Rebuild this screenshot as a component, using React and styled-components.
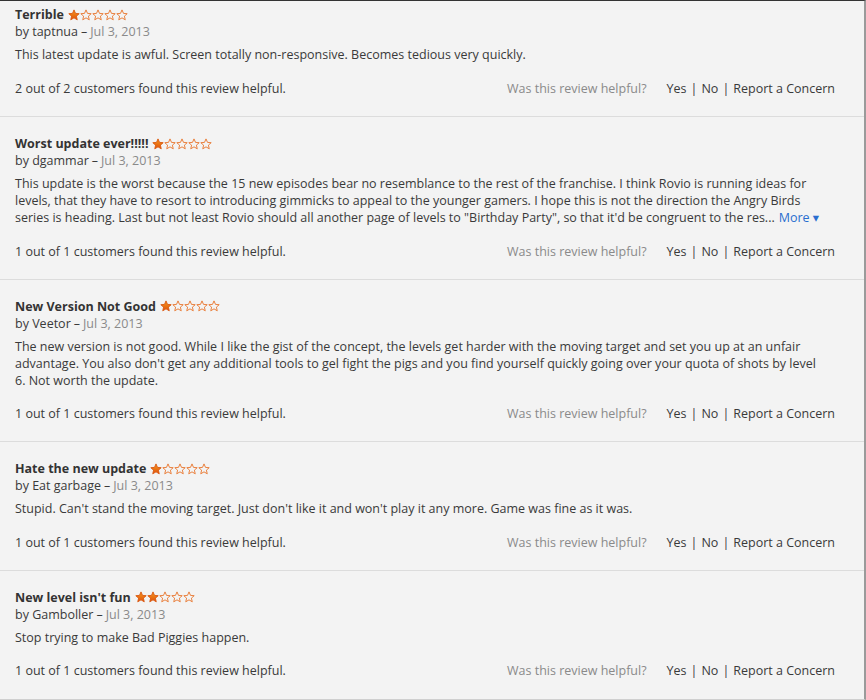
import React from 'react';
import styled, { createGlobalStyle } from 'styled-components';

const Global = createGlobalStyle`
  html, body { margin: 0; padding: 0; }
  body {
    background: #f2f2f2;
    font-family: "Open Sans", "Noto Sans", "DejaVu Sans", sans-serif;
    color: #333;
  }
`;

const Page = styled.div`
  width: 866px;
  height: 700px;
  box-sizing: border-box;
  border-top: 1px solid #333;
  border-right: 2px solid #9a9a9a;
  border-bottom: 1px solid #cfcfcf;
  background: #f3f3f3;
  overflow: hidden;
`;

const Review = styled.div`
  padding: 5px 29px ${p => (p.first ? 19.5 : 19)}px 15px;
  border-bottom: ${p => (p.last ? 'none' : '1px solid #dcdcdc')};
  margin-bottom: 13px;
`;

const Title = styled.div`
  display: flex;
  align-items: center;
  gap: 4px;
  font-size: 12.5px;
  font-weight: 700;
  line-height: 17px;
  color: #333;
`;

const Byline = styled.div`
  font-size: 12.5px;
  line-height: 17px;
  color: #3a3a3a;
`;

const Dash = styled.span`
  margin: 0 3px;
`;

const Date = styled.span`
  color: #8a8a8a;
`;

const Body = styled.div`
  margin-top: 6px;
  font-size: 12.5px;
  line-height: 17px;
  color: #3a3a3a;
  white-space: nowrap;
`;

const More = styled.a`
  color: #2a6ecf;
  margin-left: 4px;
  text-decoration: none;
`;

const Helpful = styled.div`
  margin-top: 17.6px;
  display: flex;
  justify-content: space-between;
  font-size: 12.5px;
  line-height: 16px;
  color: #3a3a3a;
`;

const Ask = styled.span`
  color: #8a8a8a;
  margin-right: 20px;
`;

const Pipe = styled.span`
  margin: 0 4px;
`;

const Stars = styled.span`
  display: inline-flex;
`;

const Star = ({ filled }) => (
  <svg width="12" height="12" viewBox="0 0 24 24">
    <defs>
      <linearGradient id="sg" x1="0" y1="0" x2="0" y2="1">
        <stop offset="0" stopColor="#f59a1c" />
        <stop offset="1" stopColor="#e0500c" />
      </linearGradient>
    </defs>
    <path
      d="M12 1.8l3 7 7.4.6-5.6 4.9 1.7 7.3L12 17.7l-6.5 3.9 1.7-7.3L1.6 9.4 9 8.8z"
      fill={filled ? 'url(#sg)' : 'none'}
      stroke={filled ? '#d9560d' : '#e8742a'}
      strokeWidth="1.8"
      strokeLinejoin="round"
    />
  </svg>
);

const reviews = [
  {
    title: 'Terrible', stars: 1, by: 'taptnua', yes: 2, total: 2,
    lines: ['This latest update is awful. Screen totally non-responsive. Becomes tedious very quickly.'],
  },
  {
    title: 'Worst update ever!!!!!', stars: 1, by: 'dgammar', yes: 1, total: 1, more: true,
    lines: [
      'This update is the worst because the 15 new episodes bear no resemblance to the rest of the franchise. I think Rovio is running ideas for',
      'levels, that they have to resort to introducing gimmicks to appeal to the younger gamers. I hope this is not the direction the Angry Birds',
      'series is heading. Last but not least Rovio should all another page of levels to "Birthday Party", so that it\'d be congruent to the res...',
    ],
  },
  {
    title: 'New Version Not Good', stars: 1, by: 'Veetor', yes: 1, total: 1,
    lines: [
      'The new version is not good. While I like the gist of the concept, the levels get harder with the moving target and set you up at an unfair',
      "advantage. You also don't get any additional tools to gel fight the pigs and you find yourself quickly going over your quota of shots by level",
      '6. Not worth the update.',
    ],
  },
  {
    title: 'Hate the new update', stars: 1, by: 'Eat garbage', yes: 1, total: 1,
    lines: ["Stupid. Can't stand the moving target. Just don't like it and won't play it any more. Game was fine as it was."],
  },
  {
    title: "New level isn't fun", stars: 2, by: 'Gamboller', yes: 1, total: 1,
    lines: ['Stop trying to make Bad Piggies happen.'],
  },
];

export default function App() {
  return (
    <>
      <Global />
      <Page>
        {reviews.map((r, i) => (
          <Review key={i} first={i === 0} last={i === reviews.length - 1}>
            <Title>
              {r.title}
              <Stars>
                {[0, 1, 2, 3, 4].map(n => <Star key={n} filled={n < r.stars} />)}
              </Stars>
            </Title>
            <Byline>by {r.by}<Dash>–</Dash><Date>Jul 3, 2013</Date></Byline>
            <Body>
              {r.lines.map((l, j) => (
                <div key={j}>
                  {l}
                  {r.more && j === r.lines.length - 1 && <More>More ▾</More>}
                </div>
              ))}
            </Body>
            <Helpful>
              <span>{r.yes} out of {r.total} customers found this review helpful.</span>
              <span>
                <Ask>Was this review helpful?</Ask>Yes<Pipe>|</Pipe>No<Pipe>|</Pipe>Report a Concern
              </span>
            </Helpful>
          </Review>
        ))}
      </Page>
    </>
  );
}
